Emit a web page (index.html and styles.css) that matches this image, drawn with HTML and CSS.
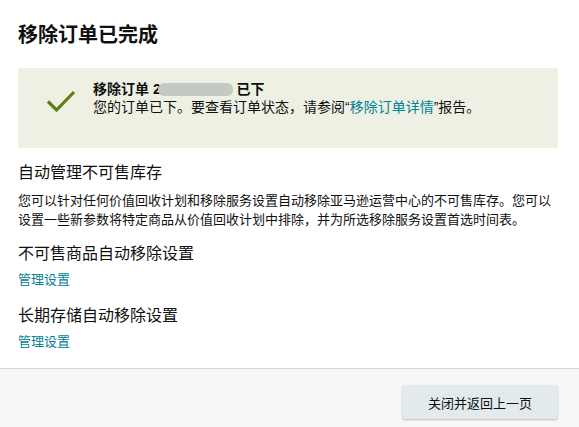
FILE: index.html
```html
<!DOCTYPE html>
<html lang="zh-CN">
<head>
<meta charset="utf-8">
<title>移除订单已完成</title>
<link rel="stylesheet" href="styles.css">
</head>
<body>
<div class="page">
  <main class="content">
    <h1 class="title">移除订单已完成</h1>
    <div class="alert">
      <svg class="alert-icon" width="30" height="24" viewBox="0 0 30 24" aria-hidden="true">
        <path d="M2 12.5 L10.5 21 L28 3" fill="none" stroke="#5a8010" stroke-width="3.2" stroke-linecap="butt" stroke-linejoin="miter"/>
      </svg>
      <div class="alert-body">
        <div class="alert-heading">移除订单 2<span class="redacted"></span> 已下</div>
        <div class="alert-text">您的订单已下。要查看订单状态，请参阅“<a class="link" href="#">移除订单详情</a>”报告。</div>
      </div>
    </div>

    <h2 class="section-title">自动管理不可售库存</h2>
    <p class="section-text">您可以针对任何价值回收计划和移除服务设置自动移除亚马逊运营中心的不可售库存。您可以设置一些新参数将特定商品从价值回收计划中排除，并为所选移除服务设置首选时间表。</p>

    <h2 class="section-title">不可售商品自动移除设置</h2>
    <a class="link block-link" href="#">管理设置</a>

    <h2 class="section-title">长期存储自动移除设置</h2>
    <a class="link block-link" href="#">管理设置</a>
  </main>
  <footer class="footer">
    <button class="btn" type="button">关闭并返回上一页</button>
  </footer>
</div>
</body>
</html>
```

FILE: styles.css
```css
* { box-sizing: border-box; }
html, body { margin: 0; padding: 0; }
body {
  font-family: "Liberation Sans", "Noto Sans CJK SC", sans-serif;
  color: #0f1111;
  background: #ffffff;
  width: 579px;
  height: 427px;
  overflow: hidden;
}
.page {
  display: flex;
  flex-direction: column;
  height: 427px;
}
.content {
  padding: 0 21px 0 18px;
  display: flex;
  flex-direction: column;
  align-items: flex-start;
}
.title {
  margin: 24px 0 22px;
  font-size: 20px;
  line-height: 22px;
  font-weight: 700;
}
.alert {
  align-self: stretch;
  height: 80px;
  background: #eef0e4;
  display: flex;
  align-items: flex-start;
  padding: 12px 0 0 28px;
}
.alert-icon {
  margin-top: 9px;
  margin-right: 17px;
  flex: none;
}
.alert-body {
  font-size: 14px;
  line-height: 18px;
}
.alert-heading {
  font-weight: 700;
  display: flex;
  align-items: center;
  white-space: pre;
}
.redacted {
  display: inline-block;
  width: 75px;
  height: 13px;
  border-radius: 6px;
  background: #c2cac3;
  margin-left: -3px;
}
.link {
  color: #008296;
  text-decoration: none;
}
.section-title {
  margin: 15px 0 0;
  font-size: 16px;
  line-height: 20px;
  font-weight: 400;
}
.section-text {
  margin: 8px 0 0;
  font-size: 13px;
  line-height: 19px;
}
.block-link {
  display: block;
  margin-top: 6px;
  font-size: 13px;
  line-height: 19px;
}
.section-text + .section-title { margin-top: 15px; }
.block-link + .section-title { margin-top: 17px; }
.footer {
  margin-top: 17px;
  flex: 1;
  border-top: 1px solid #d5d9d9;
  background: #f7f7f7;
  display: flex;
  justify-content: flex-end;
  align-items: flex-start;
  padding: 16px 21px 0 0;
}
.btn {
  width: 156px;
  height: 34px;
  border: none;
  border-radius: 3px;
  background: #e3eaeb;
  box-shadow: 0 1px 2px rgba(15, 17, 17, 0.25);
  font-family: "Liberation Sans", "Noto Sans CJK SC", sans-serif;
  font-size: 13px;
  color: #0f1111;
  cursor: pointer;
}
```
